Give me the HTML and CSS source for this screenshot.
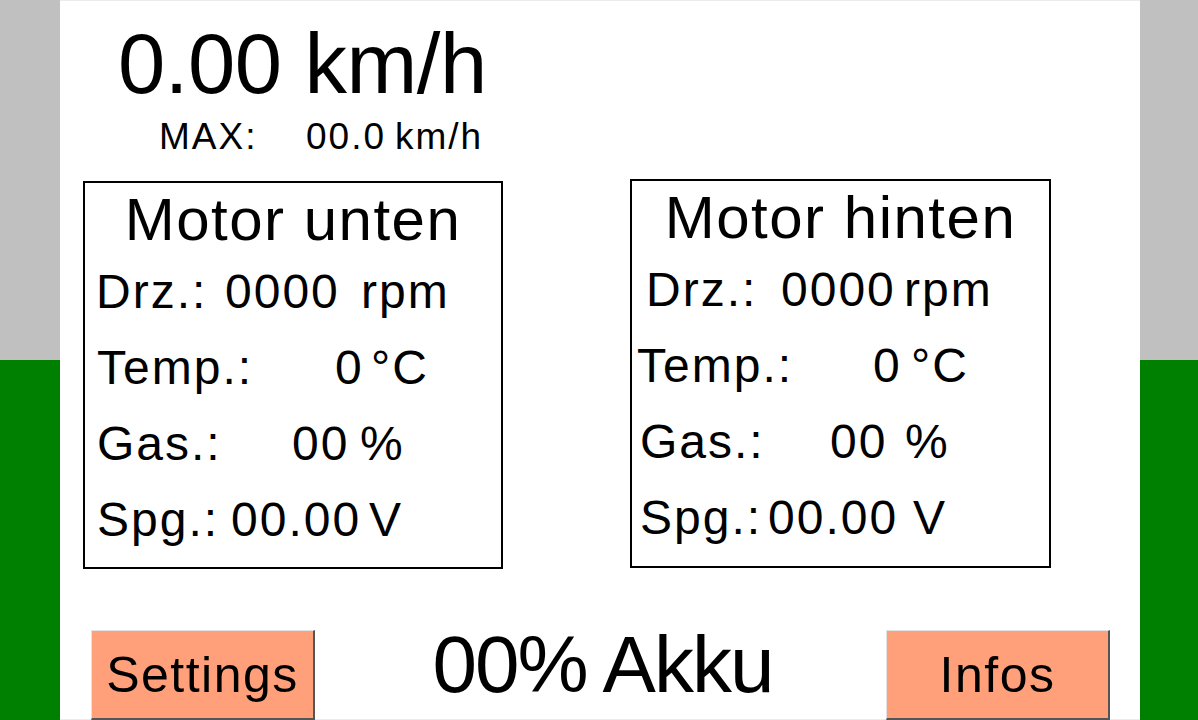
FILE: index.html
```html
<!DOCTYPE html>
<html lang="de">
<head>
<meta charset="utf-8">
<title>Dashboard</title>
<link rel="stylesheet" href="styles.css">
</head>
<body>
<div class="screen">
  <main class="panel">
    <div class="speed">0.00 km/h</div>
    <div class="max"><span class="max-lbl">MAX:</span><span class="max-val">00.0</span><span class="max-unit">km/h</span></div>

    <div class="boxes">
      <section class="motor motor-a">
        <h2 class="title">Motor unten</h2>
        <div class="row a-drz"><span class="lbl">Drz.:</span><span class="val">0000</span><span class="unit">rpm</span></div>
        <div class="row a-temp"><span class="lbl">Temp.:</span><span class="val">0</span><span class="unit">°C</span></div>
        <div class="row a-gas"><span class="lbl">Gas.:</span><span class="val">00</span><span class="unit">%</span></div>
        <div class="row a-spg"><span class="lbl">Spg.:</span><span class="val">00.00</span><span class="unit">V</span></div>
      </section>
      <section class="motor motor-b">
        <h2 class="title">Motor hinten</h2>
        <div class="row b-drz"><span class="lbl">Drz.:</span><span class="val">0000</span><span class="unit">rpm</span></div>
        <div class="row b-temp"><span class="lbl">Temp.:</span><span class="val">0</span><span class="unit">°C</span></div>
        <div class="row b-gas"><span class="lbl">Gas.:</span><span class="val">00</span><span class="unit">%</span></div>
        <div class="row b-spg"><span class="lbl">Spg.:</span><span class="val">00.00</span><span class="unit">V</span></div>
      </section>
    </div>

    <div class="bottom">
      <button class="btn btn-settings">Settings</button>
      <div class="akku">00% Akku</div>
      <button class="btn btn-infos">Infos</button>
    </div>
  </main>
</div>
</body>
</html>
```
FILE: styles.css
```css
* { box-sizing: border-box; }

html, body {
  margin: 0;
  padding: 0;
}

body {
  width: 1198px;
  height: 720px;
  overflow: hidden;
  font-family: "Liberation Sans", Arial, sans-serif;
  color: #000;
  background: linear-gradient(to bottom, #c0c0c0 0, #c0c0c0 360px, #008000 360px, #008000 720px);
}

.screen {
  height: 720px;
  padding-left: 60px;
}

.panel {
  width: 1080px;
  height: 720px;
  background: #fff;
  border-top: 1px solid #ececec;
  border-bottom: 1px solid #ececec;
  display: flex;
  flex-direction: column;
}

.speed {
  font-size: 85px;
  line-height: 85px;
  height: 85px;
  margin-top: 20px;
  padding-left: 58px;
  letter-spacing: -0.5px;
  white-space: nowrap;
}

.max {
  margin-top: 12px;
  height: 37px;
  font-size: 37px;
  line-height: 37px;
  letter-spacing: 2px;
  padding-left: 99px;
  display: flex;
  white-space: nowrap;
}

.max-lbl { width: 147px; }
.max-val { width: 89px; }

.boxes {
  margin-top: 24px;
  display: flex;
  align-items: flex-start;
}

.motor {
  border: 2px solid #000;
  display: flex;
  flex-direction: column;
}

.motor-a {
  margin-left: 23px;
  margin-top: 2px;
  width: 420px;
  height: 388px;
}

.motor-b {
  margin-left: 127px;
  width: 421px;
  height: 389px;
}

.title {
  margin: 0;
  padding-top: 2px;
  font-weight: normal;
  font-size: 60px;
  line-height: 69px;
  letter-spacing: 1.5px;
  text-align: center;
  white-space: nowrap;
}

.row {
  display: flex;
  height: 76px;
  font-size: 48px;
  line-height: 76px;
  letter-spacing: 2px;
  white-space: nowrap;
}

.lbl, .val { flex: none; }

/* Motor unten */
.a-drz  { padding-left: 11px; }
.a-drz .lbl  { width: 129px; }
.a-drz .val  { width: 136px; }

.a-temp { padding-left: 12px; }
.a-temp .lbl { width: 238px; }
.a-temp .val { width: 36px; }

.a-gas  { padding-left: 12px; }
.a-gas .lbl  { width: 195px; }
.a-gas .val  { width: 68px; }

.a-spg  { padding-left: 12px; }
.a-spg .lbl  { width: 134px; }
.a-spg .val  { width: 138px; }

/* Motor hinten */
.b-drz  { padding-left: 14px; }
.b-drz .lbl  { width: 135px; }
.b-drz .val  { width: 123px; }

.b-temp { padding-left: 5px; }
.b-temp .lbl { width: 236px; }
.b-temp .val { width: 38px; }

.b-gas  { padding-left: 8px; }
.b-gas .lbl  { width: 190px; }
.b-gas .val  { width: 75px; }

.b-spg  { padding-left: 8px; }
.b-spg .lbl  { width: 128px; }
.b-spg .val  { width: 145px; }

.bottom {
  margin-top: 61px;
  height: 89px;
  display: flex;
  justify-content: space-between;
  align-items: flex-start;
  padding: 0 30px 0 31px;
}

.btn {
  width: 224px;
  height: 90px;
  margin: 0;
  padding: 0;
  background: #ffa07a;
  border-top: 1px solid #e2e2e2;
  border-left: 1px solid #e2e2e2;
  border-right: 2px solid #555;
  border-bottom: 2px solid #555;
  border-radius: 0;
  font-family: "Liberation Sans", Arial, sans-serif;
  font-size: 50px;
  line-height: 50px;
  letter-spacing: 1.5px;
  color: #000;
  text-align: center;
  vertical-align: top;
}

.akku {
  font-size: 80px;
  line-height: 70px;
  letter-spacing: -2px;
  margin-left: 4px;
  white-space: nowrap;
}
```
